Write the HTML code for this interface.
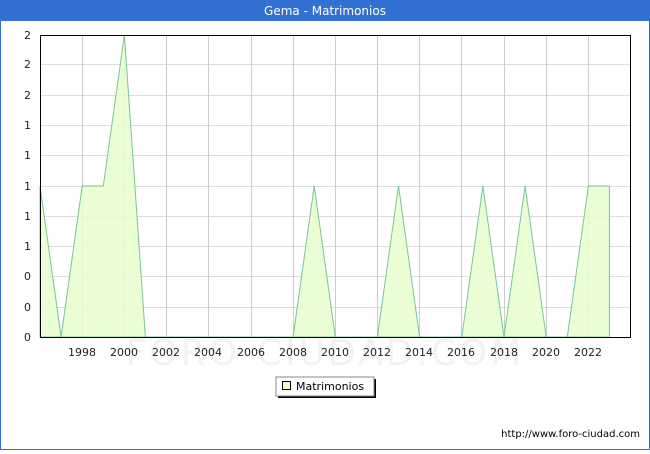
<!DOCTYPE html>
<html><head><style>
body{margin:0;width:650px;height:450px;overflow:hidden;font-family:"DejaVu Sans","Liberation Sans",sans-serif}
</style></head><body>
<svg width="650" height="450" xmlns="http://www.w3.org/2000/svg" font-family="DejaVu Sans, Liberation Sans, sans-serif">
<rect x="0.5" y="0.5" width="649" height="449" fill="#fff" stroke="#3370d4"/>
<rect x="0" y="0" width="650" height="21" fill="#3370d4"/>
<text x="325" y="15" fill="#fff" font-size="12" text-anchor="middle">Gema - Matrimonios</text>
<text x="325" y="365" fill="#f2f2f2" font-size="36" text-anchor="middle" letter-spacing="3">FORO-CIUDAD.COM</text>
<g stroke="#dddddd" stroke-width="1">
<line x1="40" y1="64.5" x2="630" y2="64.5"/><line x1="40" y1="95.5" x2="630" y2="95.5"/><line x1="40" y1="125.5" x2="630" y2="125.5"/><line x1="40" y1="155.5" x2="630" y2="155.5"/><line x1="40" y1="186.5" x2="630" y2="186.5"/><line x1="40" y1="216.5" x2="630" y2="216.5"/><line x1="40" y1="246.5" x2="630" y2="246.5"/><line x1="40" y1="276.5" x2="630" y2="276.5"/><line x1="40" y1="307.5" x2="630" y2="307.5"/>
</g>
<g stroke="#cccccc" stroke-width="1">
<line x1="82.5" y1="35" x2="82.5" y2="337"/><line x1="124.5" y1="35" x2="124.5" y2="337"/><line x1="166.5" y1="35" x2="166.5" y2="337"/><line x1="208.5" y1="35" x2="208.5" y2="337"/><line x1="251.5" y1="35" x2="251.5" y2="337"/><line x1="293.5" y1="35" x2="293.5" y2="337"/><line x1="335.5" y1="35" x2="335.5" y2="337"/><line x1="377.5" y1="35" x2="377.5" y2="337"/><line x1="419.5" y1="35" x2="419.5" y2="337"/><line x1="461.5" y1="35" x2="461.5" y2="337"/><line x1="504.5" y1="35" x2="504.5" y2="337"/><line x1="546.5" y1="35" x2="546.5" y2="337"/><line x1="588.5" y1="35" x2="588.5" y2="337"/>
</g>
<polygon fill="#e6ffcc" fill-opacity="0.85" stroke="#7ac49a" stroke-width="1" points="40,337 40,186 61.1,337 82.2,186 103.3,186 124.4,35 145.4,337 293.1,337 314.2,186 335.3,337 377.4,337 398.5,186 419.6,337 461.8,337 482.9,186 504,337 525.1,186 546.2,337 567.3,337 588.4,186 609.4,186 609.4,337"/>
<rect x="40.5" y="35.5" width="590" height="302" fill="none" stroke="#000"/>
<g font-size="11" fill="#222" text-anchor="end">
<text x="31" y="341">0</text><text x="31" y="311">0</text><text x="31" y="280">0</text><text x="31" y="250">1</text><text x="31" y="220">1</text><text x="31" y="190">1</text><text x="31" y="159">1</text><text x="31" y="129">1</text><text x="31" y="99">2</text><text x="31" y="68">2</text><text x="31" y="39">2</text>
</g>
<g font-size="11" fill="#222" text-anchor="middle">
<text x="82" y="356">1998</text><text x="124" y="356">2000</text><text x="166" y="356">2002</text><text x="208" y="356">2004</text><text x="251" y="356">2006</text><text x="293" y="356">2008</text><text x="335" y="356">2010</text><text x="377" y="356">2012</text><text x="419" y="356">2014</text><text x="461" y="356">2016</text><text x="504" y="356">2018</text><text x="546" y="356">2020</text><text x="588" y="356">2022</text>
</g>
<rect x="278" y="379" width="98" height="19" fill="#000"/>
<rect x="276" y="377" width="98" height="19" fill="#fff" stroke="#888"/>
<rect x="282.5" y="381.5" width="8" height="8" fill="#e6ffcc" stroke="#000"/>
<text x="296" y="390" font-size="11" fill="#000">Matrimonios</text>
<text x="640" y="437" font-size="10" fill="#000" text-anchor="end">http://www.foro-ciudad.com</text>
</svg>
</body></html>
